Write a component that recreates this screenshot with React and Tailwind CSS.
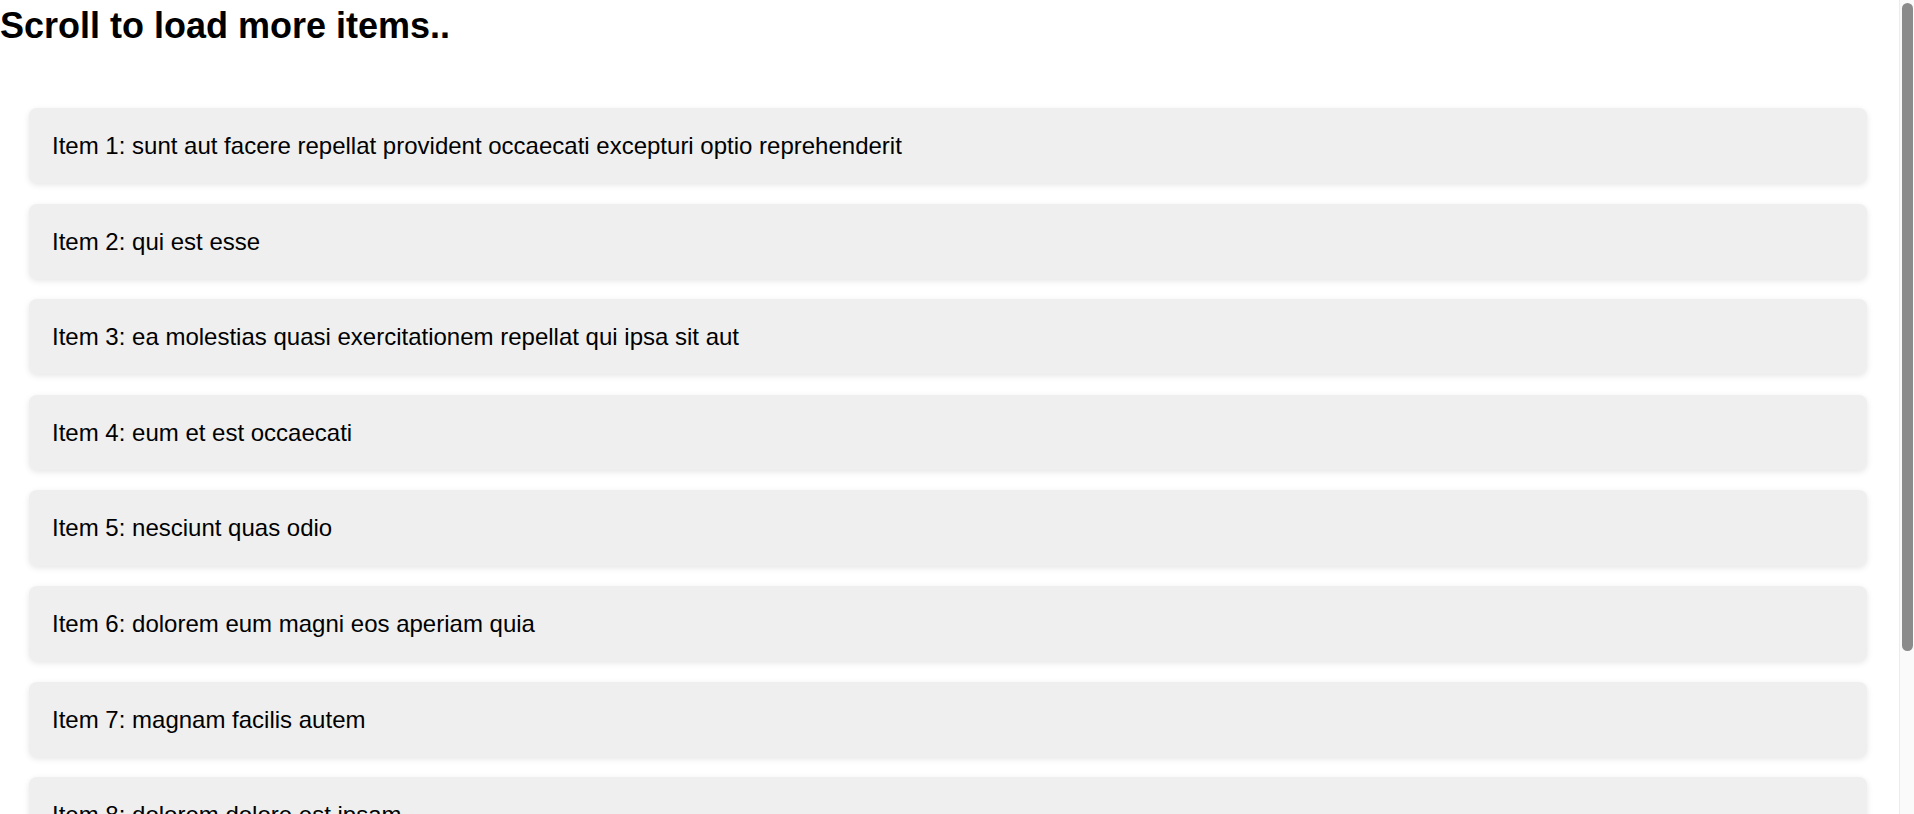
const titles = [
  "sunt aut facere repellat provident occaecati excepturi optio reprehenderit",
  "qui est esse",
  "ea molestias quasi exercitationem repellat qui ipsa sit aut",
  "eum et est occaecati",
  "nesciunt quas odio",
  "dolorem eum magni eos aperiam quia",
  "magnam facilis autem",
  "dolorem dolore est ipsam",
  "nesciunt iure omnis dolorem tempora et accusantium",
];

export default function App() {
  return (
    <div className="flex h-[814px] overflow-hidden bg-white text-black" style={{ fontFamily: '"Liberation Sans", Arial, sans-serif' }}>
      <div className="flex-1 min-w-0 overflow-hidden">
        <h1 className="text-[36px] font-bold leading-[41px] pt-[5px] m-0">Scroll to load more items..</h1>
        <div className="flex flex-col gap-[20.3px] pt-[62px] pl-[29px] pr-[32px] pb-[66px]">
          {titles.map((t, i) => (
            <div
              key={i}
              className="bg-[#efefef] rounded-[8px] shadow-[0_2px_6px_rgba(0,0,0,0.1)] px-[23px] py-[24px] text-[24px] leading-[27.3px] whitespace-nowrap"
            >
              Item {i + 1}: {t}
            </div>
          ))}
        </div>
      </div>
      <div className="w-[15px] shrink-0 bg-[#fafafa] border-l border-[#ececec] pt-[3px] pl-[2px] pr-[1px]">
        <div className="h-[648px] rounded-full bg-[#8b8b8b]"></div>
      </div>
    </div>
  );
}
